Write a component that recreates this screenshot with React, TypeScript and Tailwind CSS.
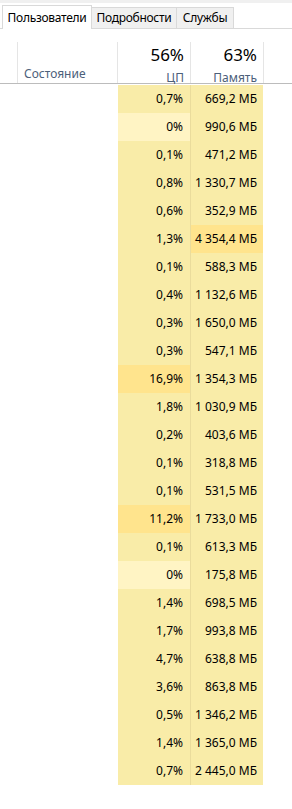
import React from 'react';

type Row = { cpu: string; mem: string; cpuTone?: 'light' | 'mid'; memTone?: 'light' | 'mid' };

const rows: Row[] = [
  { cpu: '0,7%', mem: '669,2 МБ' },
  { cpu: '0%', mem: '990,6 МБ', cpuTone: 'light' },
  { cpu: '0,1%', mem: '471,2 МБ' },
  { cpu: '0,8%', mem: '1 330,7 МБ' },
  { cpu: '0,6%', mem: '352,9 МБ' },
  { cpu: '1,3%', mem: '4 354,4 МБ', memTone: 'mid' },
  { cpu: '0,1%', mem: '588,3 МБ' },
  { cpu: '0,4%', mem: '1 132,6 МБ' },
  { cpu: '0,3%', mem: '1 650,0 МБ' },
  { cpu: '0,3%', mem: '547,1 МБ' },
  { cpu: '16,9%', mem: '1 354,3 МБ', cpuTone: 'mid' },
  { cpu: '1,8%', mem: '1 030,9 МБ' },
  { cpu: '0,2%', mem: '403,6 МБ' },
  { cpu: '0,1%', mem: '318,8 МБ' },
  { cpu: '0,1%', mem: '531,5 МБ' },
  { cpu: '11,2%', mem: '1 733,0 МБ', cpuTone: 'mid' },
  { cpu: '0,1%', mem: '613,3 МБ' },
  { cpu: '0%', mem: '175,8 МБ', cpuTone: 'light' },
  { cpu: '1,4%', mem: '698,5 МБ' },
  { cpu: '1,7%', mem: '993,8 МБ' },
  { cpu: '4,7%', mem: '638,8 МБ' },
  { cpu: '3,6%', mem: '863,8 МБ' },
  { cpu: '0,5%', mem: '1 346,2 МБ' },
  { cpu: '1,4%', mem: '1 365,0 МБ' },
  { cpu: '0,7%', mem: '2 445,0 МБ' },
];

const tone = (t?: 'light' | 'mid') =>
  t === 'light' ? 'bg-[#fff4c4]' : t === 'mid' ? 'bg-[#ffe48d]' : 'bg-[#f9eca8]';

export default function App() {
  return (
    <div className="w-[292px] h-[809px] bg-white text-[12px] text-black overflow-hidden" style={{ fontFamily: '"Noto Sans", sans-serif' }}>
      {/* top strip */}
      <div className="h-[3px] bg-[#f0f0f0]" />
      <div className="h-[3px]" />

      {/* tabs */}
      <div className="flex items-end h-[23px] pl-[2px] border-b border-[#d9d9d9] tracking-[-0.3px]">
        <div className="relative -mb-px w-[90px] h-[24px] flex items-center justify-center bg-white border border-b-0 border-[#d9d9d9] leading-none">
          Пользователи
        </div>
        <div className="w-[85px] h-[21px] flex items-center justify-center bg-[#f0f0f0] border border-l-0 border-b-0 border-[#d9d9d9] leading-none">
          Подробности
        </div>
        <div className="w-[57px] h-[21px] flex items-center justify-center bg-[#f0f0f0] border border-l-0 border-b-0 border-[#d9d9d9] leading-none">
          Службы
        </div>
      </div>

      {/* header */}
      <div className="pt-[13px] border-b border-[#bcbcbc]">
        <div className="flex h-[41px]">
          <div className="w-[18px] border-r border-[#e5e5e5]" />
          <div className="w-[100px] border-r border-[#e5e5e5] flex items-end pl-[6px] pb-[3px] text-[#4c607a] leading-none">
            Состояние
          </div>
          <div className="w-[73px] border-r border-[#e5e5e5] flex flex-col items-end pr-[6px] pt-[4px] leading-none">
            <span className="text-[17px]">56%</span>
            <span className="mt-[9px] text-[#4c607a]">ЦП</span>
          </div>
          <div className="w-[73px] border-r border-[#e5e5e5] flex flex-col items-end pr-[6px] pt-[4px] leading-none">
            <span className="text-[17px]">63%</span>
            <span className="mt-[9px] text-[#4c607a]">Память</span>
          </div>
        </div>
      </div>

      {/* rows */}
      <div className="pt-px">
        {rows.map((r, i) => (
          <div key={i} className="flex h-[28px]">
            <div className="w-[118px]" />
            <div className={`w-[73px] border-r border-[#eadc9c] flex items-center justify-end pr-[7px] ${tone(r.cpuTone)}`}>
              {r.cpu}
            </div>
            <div className={`w-[72px] flex items-center justify-end pr-[6px] ${tone(r.memTone)}`}>
              {r.mem}
            </div>
          </div>
        ))}
      </div>
    </div>
  );
}
